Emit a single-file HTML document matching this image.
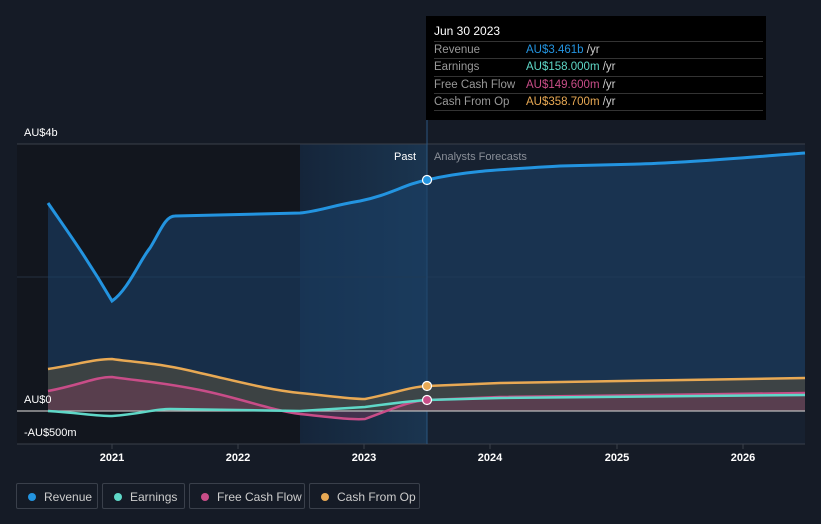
<!DOCTYPE html>
<html><head><meta charset="utf-8"><style>
body{margin:0;width:821px;height:524px;background:#151b26;font-family:"Liberation Sans",sans-serif;overflow:hidden;position:relative}
.tt{position:absolute;left:426px;top:16px;width:340px;height:104px;background:#000;color:#fff;font-size:11px}
.tt .h{position:absolute;left:8px;top:8px;font-size:12px}
.tt .r{position:absolute;left:8px;width:329px;height:17px;border-top:1px solid #333;line-height:17px;color:#999;font-size:11.5px}
.tt .r span{position:absolute;left:92px}
.tt .r i{font-style:normal;color:#ccc}
.leg{position:absolute;top:483px;height:26px;border:1px solid #3a404b;border-radius:2px;color:#ccc;font-size:12px;line-height:26px;box-sizing:border-box}
.leg b{position:absolute;left:11px;top:9px;width:8px;height:8px;border-radius:50%}
.leg span{position:absolute;left:27px}
</style></head><body>
<svg width="821" height="524" style="position:absolute;left:0;top:0">
<defs>
<linearGradient id="hl" x1="0" x2="1"><stop offset="0" stop-color="#15253a"/><stop offset="1" stop-color="#1a3550"/></linearGradient>
</defs>
<rect x="17" y="144" width="283" height="300" fill="#12161e"/>
<rect x="300" y="144" width="127" height="300" fill="url(#hl)"/>
<rect x="427" y="144" width="378" height="300" fill="#172130"/>
<line x1="17" y1="144" x2="805" y2="144" stroke="#3a404b"/>
<line x1="17" y1="277" x2="805" y2="277" stroke="#243040"/>
<line x1="17" y1="444" x2="805" y2="444" stroke="#3a404b"/>
<line x1="427" y1="120" x2="427" y2="444" stroke="#2b5680"/>
<path d="M48,203 C65,228 85,255 112,301 C128,290 140,260 150,248 C160,232 165,216 175,216 L300,213 C320,211 330,206 360,201 C390,195 405,184 427,180 C460,172 490,170 560,166 L640,164 C700,162 750,157 805,153 L805,411 L48,411Z" fill="#1a4066" fill-opacity="0.6"/>
<path d="M48,369 C80,364 95,359 112,359 C140,363 160,363 200,373 C240,382 270,390 300,393 C330,396 350,399 365,399 C395,393 410,387 427,386 L500,383 L805,378 L805,411 L48,411Z" fill="#4a4a42" fill-opacity="0.75"/>
<path d="M48,391 C80,385 95,377 112,377 C140,381 160,382 200,390 C240,398 270,410 300,414 C330,417 350,420 365,419 C395,408 410,401 427,400 L500,397 L805,393 L805,411 L48,411Z" fill="#7a3a5a" fill-opacity="0.45"/>
<line x1="17" y1="411" x2="805" y2="411" stroke="#bbb" stroke-width="1.2"/>
<path d="M48,203 C65,228 85,255 112,301 C128,290 140,260 150,248 C160,232 165,216 175,216 L300,213 C320,211 330,206 360,201 C390,195 405,184 427,180 C460,172 490,170 560,166 L640,164 C700,162 750,157 805,153" fill="none" stroke="#2394e0" stroke-width="3"/>
<path d="M48,369 C80,364 95,359 112,359 C140,363 160,363 200,373 C240,382 270,390 300,393 C330,396 350,399 365,399 C395,393 410,387 427,386 L500,383 L805,378" fill="none" stroke="#e8a954" stroke-width="2.5"/>
<path d="M48,391 C80,385 95,377 112,377 C140,381 160,382 200,390 C240,398 270,410 300,414 C330,417 350,420 365,419 C395,408 410,401 427,400 L500,397 L805,393" fill="none" stroke="#c84d88" stroke-width="2.5"/>
<path d="M48,411 C80,413 95,416 112,416 C140,414 155,409 170,409 L300,411 C330,409 350,408 365,407 C395,403 410,401 427,400 L500,398 L805,395" fill="none" stroke="#5fd8c8" stroke-width="2.5"/>
<circle cx="427" cy="180" r="4.5" fill="#2394e0" stroke="#fff" stroke-width="1.2"/>
<circle cx="427" cy="386" r="4.5" fill="#e8a954" stroke="#fff" stroke-width="1.2"/>
<circle cx="427" cy="400" r="4.5" fill="#c84d88" stroke="#fff" stroke-width="1.2"/>
<g font-size="11" fill="#fff" font-family="Liberation Sans,sans-serif">
<text x="24" y="136">AU$4b</text>
<text x="24" y="403">AU$0</text>
<text x="24" y="436">-AU$500m</text>
<text x="394" y="160">Past</text>
<text x="434" y="160" fill="#8a8f98">Analysts Forecasts</text>
<g text-anchor="middle" font-weight="bold" font-size="11"><text x="112" y="461">2021</text><text x="238" y="461">2022</text><text x="364" y="461">2023</text><text x="490" y="461">2024</text><text x="617" y="461">2025</text><text x="743" y="461">2026</text></g>
</g>
<g stroke="#3a404b"><line x1="112" y1="444" x2="112" y2="449"/><line x1="238" y1="444" x2="238" y2="449"/><line x1="364" y1="444" x2="364" y2="449"/><line x1="490" y1="444" x2="490" y2="449"/><line x1="617" y1="444" x2="617" y2="449"/><line x1="743" y1="444" x2="743" y2="449"/></g>
</svg>
<div class="tt">
<div class="h">Jun 30 2023</div>
<div class="r" style="top:25px">Revenue<span><b style="font-weight:normal;color:#2394e0">AU$3.461b</b> <i>/yr</i></span></div>
<div class="r" style="top:42px">Earnings<span><b style="font-weight:normal;color:#5fd8c8">AU$158.000m</b> <i>/yr</i></span></div>
<div class="r" style="top:60px">Free Cash Flow<span><b style="font-weight:normal;color:#c84d88">AU$149.600m</b> <i>/yr</i></span></div>
<div class="r" style="top:77px">Cash From Op<span><b style="font-weight:normal;color:#e8a954">AU$358.700m</b> <i>/yr</i></span></div>
<div class="r" style="top:94px;height:0"></div>
</div>
<div class="leg" style="left:16px;width:82px"><b style="background:#2394e0"></b><span>Revenue</span></div>
<div class="leg" style="left:102px;width:83px"><b style="background:#5fd8c8"></b><span>Earnings</span></div>
<div class="leg" style="left:189px;width:116px"><b style="background:#c84d88"></b><span>Free Cash Flow</span></div>
<div class="leg" style="left:309px;width:111px"><b style="background:#e8a954"></b><span>Cash From Op</span></div>
</body></html>
